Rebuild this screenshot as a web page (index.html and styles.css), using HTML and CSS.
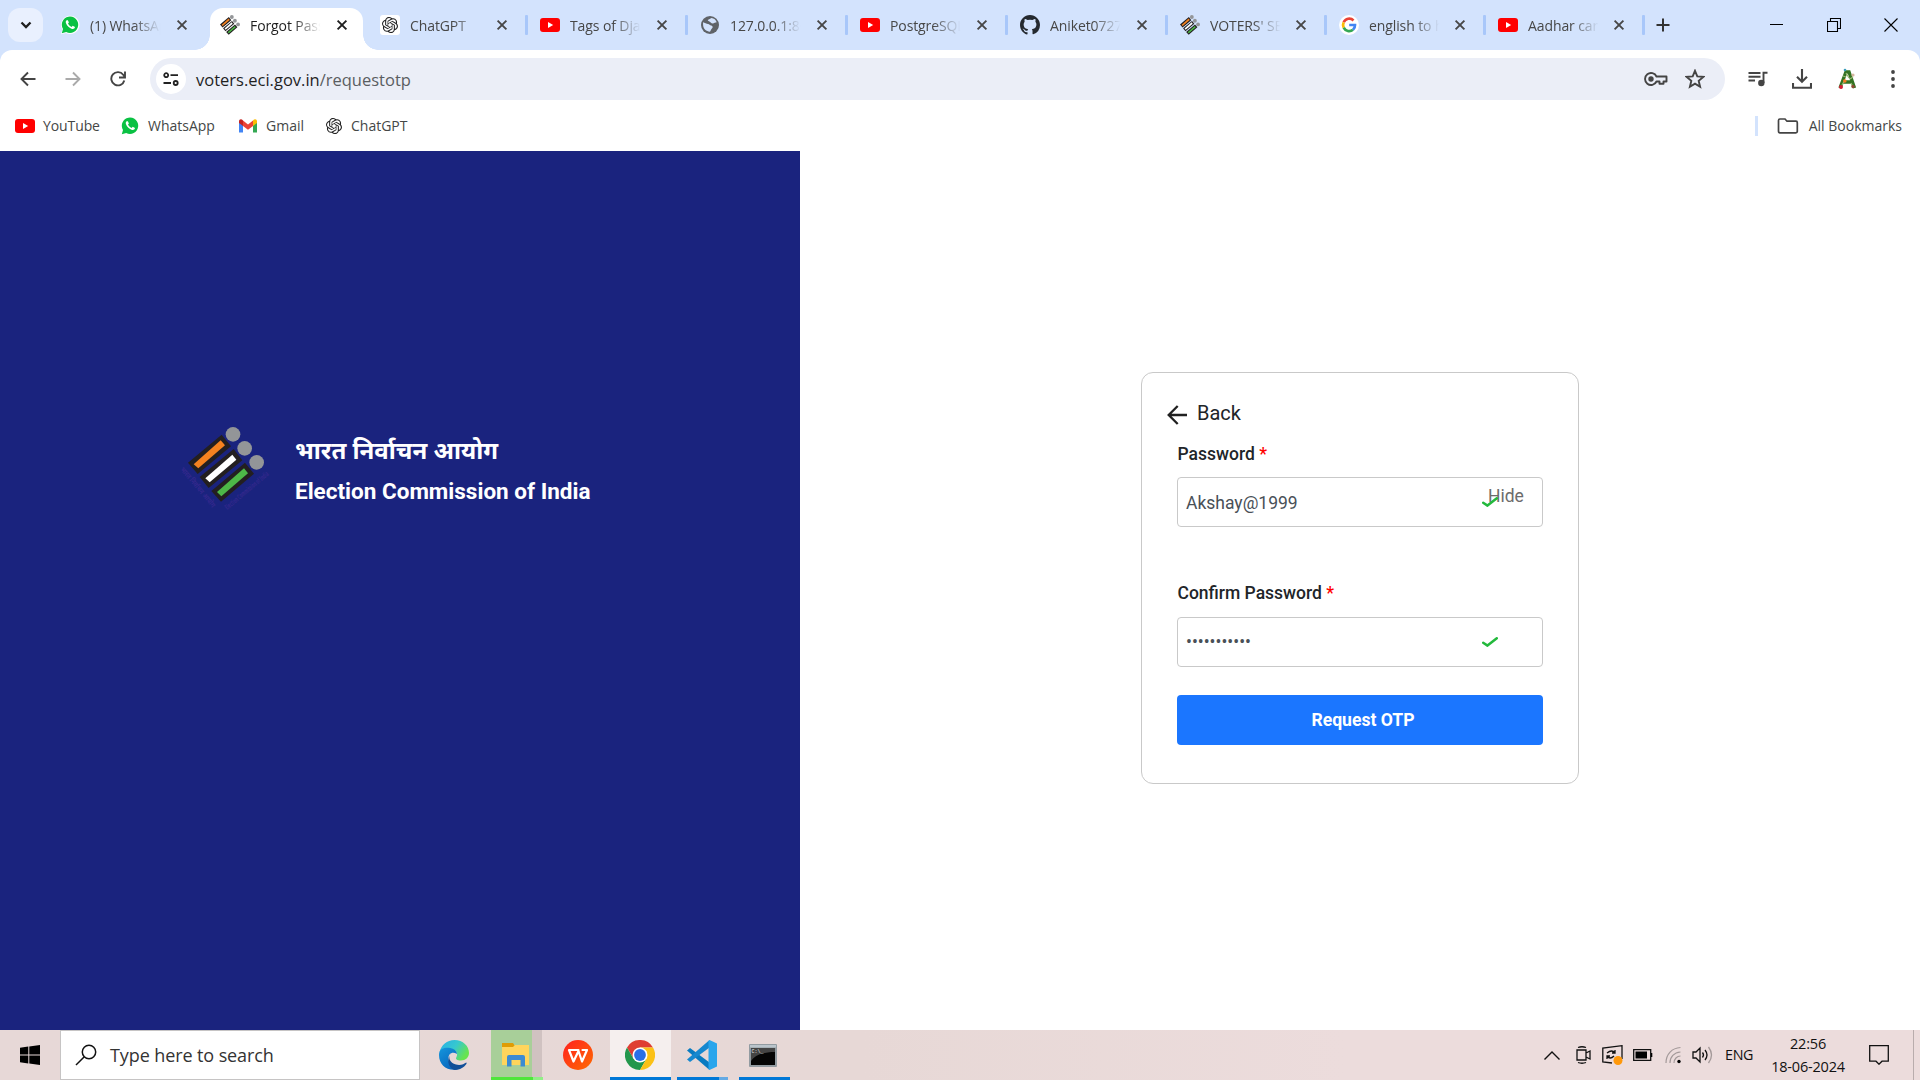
FILE: index.html
```html
<!DOCTYPE html>
<html lang="en">
<head>
<meta charset="utf-8">
<title>Forgot Password</title>
<link rel="stylesheet" href="styles.css">
</head>
<body>
<svg class="defs" aria-hidden="true">
  <symbol id="close" viewBox="0 0 12 12"><path d="M1.6 1.6l8.8 8.8M10.4 1.6l-8.8 8.8" stroke="currentColor" stroke-width="1.9" fill="none"/></symbol>
  <symbol id="youtube" viewBox="0 0 20 20"><rect y="3" width="20" height="14" rx="3" fill="#f00"/><path d="M8 7l5.2 3L8 13z" fill="#fff"/></symbol>
  <symbol id="whatsapp" viewBox="0 0 20 20"><path d="M1 19.3l1.3-4.9A9.2 9.2 0 1 1 6 18z" fill="#fff"/><path d="M1.8 18.3l1.2-4.3A8.2 8.2 0 1 1 6.2 17z" fill="#0ac143"/><path d="M6.7 5.2c-.9.7-1.2 1.8-.7 3 1.1 2.8 3.3 4.9 6 5.7 1.6.4 2.8-.4 3-1.8l-2.3-1.3-1.1 1.2c-1.8-.7-2.9-1.8-3.6-3.4l.9-1-1-2.4z" fill="#fff"/></symbol>
  <symbol id="gpt" viewBox="0 0 24 24"><path fill="#222" d="M22.282 9.821a5.985 5.985 0 0 0-.516-4.910 6.046 6.046 0 0 0-6.510-2.900A6.065 6.065 0 0 0 4.981 4.182a5.985 5.985 0 0 0-3.998 2.900 6.046 6.046 0 0 0 .743 7.097 5.980 5.980 0 0 0 .511 4.911 6.051 6.051 0 0 0 6.515 2.900A5.985 5.985 0 0 0 13.260 24a6.056 6.056 0 0 0 5.772-4.206 5.990 5.990 0 0 0 3.998-2.900 6.056 6.056 0 0 0-.748-7.073zM13.260 22.430a4.476 4.476 0 0 1-2.876-1.041l.142-.080 4.778-2.758a.795.795 0 0 0 .393-.681v-6.737l2.020 1.169a.071.071 0 0 1 .038.052v5.583a4.504 4.504 0 0 1-4.495 4.493zM3.600 18.304a4.471 4.471 0 0 1-.535-3.014l.142.085 4.783 2.759a.771.771 0 0 0 .781 0l5.843-3.369v2.332a.080.080 0 0 1-.033.062L9.740 19.950a4.500 4.500 0 0 1-6.140-1.646zM2.341 7.896a4.485 4.485 0 0 1 2.366-1.973V11.600a.766.766 0 0 0 .388.677l5.814 3.354-2.020 1.169a.076.076 0 0 1-.071 0l-4.830-2.787A4.504 4.504 0 0 1 2.341 7.872zm16.597 3.855l-5.833-3.387L15.119 7.200a.076.076 0 0 1 .071 0l4.830 2.791a4.494 4.494 0 0 1-.676 8.105v-5.678a.790.790 0 0 0-.407-.667zm2.010-3.023l-.142-.085-4.774-2.782a.776.776 0 0 0-.785 0L9.409 9.230V6.897a.066.066 0 0 1 .028-.061l4.830-2.787a4.500 4.500 0 0 1 6.680 4.660zM8.307 12.863l-2.020-1.164a.080.080 0 0 1-.038-.057V6.075a4.500 4.500 0 0 1 7.376-3.454l-.142.081L8.704 5.460a.795.795 0 0 0-.393.681zm1.098-2.365l2.602-1.500 2.607 1.500v2.999l-2.598 1.500-2.607-1.500z"/></symbol>
  <symbol id="emblem" viewBox="0 0 228 228"><g fill="#231f20"><path d="M0 108L101 24l28 35L29 142z"/><path d="M35 151l102-84 26 34L62 184z"/><path d="M70 193l101-85 27 33L99 225z"/></g>
    <path d="M17 113l81-72 13 15-80 69z" fill="#f58220"/><path d="M52 155l81-71 12 15-80 68z" fill="#fff"/><path d="M87 196l81-71 12 15-80 69z" fill="#4db848"/>
    <g fill="#939598"><circle cx="135" cy="23" r="22"/><circle cx="170" cy="65" r="22"/><circle cx="206" cy="107" r="22"/></g></symbol>
  <symbol id="globe" viewBox="0 0 20 20"><circle cx="10" cy="10" r="9" fill="#5f6368"/><path d="M3 7.2c1.800.3 3.500 1.800 5 1.800 1.600 0 1.600 1.500 3.200 1.500 1.600.2 2 2 .7 3-1 .7-1 2.300-2 3.200-3.500 0-6.800-3-6.800-6.600zM11.500 3c-1.400.5-2.300 1.500-3.800 2 .2 1.500 2 1.300 3 2.500 1 1.500 3 1.200 4 .3l2-.5C16 5 14 3.200 11.500 3z" fill="#d3e3fd"/></symbol>
  <symbol id="github" viewBox="0 0 16 16"><path fill="#24292f" d="M8 0C3.580 0 0 3.580 0 8c0 3.540 2.290 6.530 5.470 7.590.4.070.55-.17.55-.38v-1.500c-2.230.48-2.700-1.070-2.700-1.070-.36-.92-.89-1.170-.89-1.170-.73-.5.060-.49.060-.49.800.060 1.230.83 1.230.83.710 1.220 1.870.87 2.330.66.070-.52.280-.87.510-1.070-1.780-.2-3.640-.89-3.640-3.950 0-.87.310-1.590.82-2.150-.08-.2-.36-1.020.08-2.120 0 0 .67-.21 2.200.82a7.600 7.600 0 0 1 4 0c1.530-1.040 2.200-.82 2.200-.82.440 1.100.16 1.920.08 2.120.51.560.82 1.270.82 2.150 0 3.070-1.870 3.750-3.650 3.950.29.250.54.730.54 1.480v2.200c0 .21.150.46.550.38A8 8 0 0 0 16 8c0-4.420-3.580-8-8-8z"/></symbol>
  <symbol id="google" viewBox="0 0 20 20"><circle cx="10" cy="10" r="10" fill="#fff"/><g fill="none" stroke-width="2.700"><path d="M14.500 5.500A6 6 0 0 0 4.700 7.300" stroke="#ea4335"/><path d="M4.700 7.300a6 6 0 0 0 0 5.400" stroke="#fbbc05"/><path d="M4.700 12.700a6 6 0 0 0 9.300 2" stroke="#34a853"/><path d="M14 14.700A6 6 0 0 0 16 10h-5.800" stroke="#4285f4"/></g></symbol>
  <symbol id="tick" viewBox="0 0 16 10"><path d="M1.200 5.800L5.500 8.600 14.800 1.300" fill="none" stroke="#23b93c" stroke-width="2.500" stroke-linecap="round" stroke-linejoin="round"/></symbol>
</svg>

<header class="tabs">
  <button class="tab-search"><svg width="12" height="8" viewBox="0 0 12 8"><path d="M1.500 1.500L6 6l4.500-4.500" fill="none" stroke="#1f1f1f" stroke-width="2.300"/></svg></button>
  <div class="tab"><svg class="fav"><use href="#whatsapp"/></svg><span class="title">(1) WhatsApp</span><svg class="x"><use href="#close"/></svg></div>
  <div class="tab active"><svg class="fav"><use href="#emblem"/></svg><span class="title">Forgot Password</span><svg class="x"><use href="#close"/></svg></div>
  <div class="tab sep"><svg class="fav tile" viewBox="-3 -3 30 30"><use href="#gpt" width="24" height="24"/></svg><span class="title">ChatGPT</span><svg class="x"><use href="#close"/></svg></div>
  <div class="tab sep"><svg class="fav"><use href="#youtube"/></svg><span class="title">Tags of Django</span><svg class="x"><use href="#close"/></svg></div>
  <div class="tab sep"><svg class="fav"><use href="#globe"/></svg><span class="title">127.0.0.1:8000</span><svg class="x"><use href="#close"/></svg></div>
  <div class="tab sep"><svg class="fav"><use href="#youtube"/></svg><span class="title">PostgreSQL</span><svg class="x"><use href="#close"/></svg></div>
  <div class="tab sep"><svg class="fav"><use href="#github"/></svg><span class="title">Aniket0727</span><svg class="x"><use href="#close"/></svg></div>
  <div class="tab sep short"><svg class="fav"><use href="#emblem"/></svg><span class="title">VOTERS' SERVICE</span><svg class="x"><use href="#close"/></svg></div>
  <div class="tab sep short"><svg class="fav"><use href="#google"/></svg><span class="title">english to hindi</span><svg class="x"><use href="#close"/></svg></div>
  <div class="tab sep short"><svg class="fav"><use href="#youtube"/></svg><span class="title">Aadhar card</span><svg class="x"><use href="#close"/></svg></div>
  <svg class="plus" width="14" height="14" viewBox="0 0 14 14"><path d="M7 .5v13M.5 7h13" stroke="#333" stroke-width="2"/></svg>
  <div class="window-controls">
    <svg width="14" height="14" viewBox="0 0 14 14"><path d="M0 6.500h13" stroke="#000"/></svg>
    <svg width="14" height="14" viewBox="0 0 14 14"><path d="M.5 3.500h10v10H.5zM3.500 3.500v-3h10v10h-3" fill="none" stroke="#000" stroke-width="1.100"/></svg>
    <svg width="14" height="14" viewBox="0 0 14 14"><path d="M.5.5l13 13M13.500.5l-13 13" stroke="#000" stroke-width="1.100"/></svg>
  </div>
</header>

<div class="chrome">
  <nav class="toolbar">
    <svg class="nav-icon" width="16" height="16" viewBox="0 0 16 16"><path d="M15.500 8H2M8 1.500L1.500 8 8 14.500" fill="none" stroke="#444" stroke-width="1.900"/></svg>
    <svg class="nav-icon" width="16" height="16" viewBox="0 0 16 16"><path d="M.5 8H14M8 1.500L14.500 8 8 14.500" fill="none" stroke="#aaa" stroke-width="1.900"/></svg>
    <svg class="nav-icon" width="16" height="16" viewBox="0 0 16 16"><path d="M14.300 9.400A6.600 6.600 0 1 1 13.200 3.800L14.500 5.500M15 .5v6H9" fill="none" stroke="#444" stroke-width="1.900"/></svg>
    <div class="omnibox">
      <span class="site"><svg width="16" height="14" viewBox="0 0 16 14"><g fill="none" stroke="#222" stroke-width="1.800"><circle cx="3.200" cy="3.200" r="2"/><path d="M7.500 3.200H15M.5 11H8"/><circle cx="12.700" cy="11" r="2"/></g></svg></span>
      <span class="url">voters.eci.gov.in<span class="path">/requestotp</span></span>
      <svg class="key" width="24" height="14" viewBox="0 0 24 14"><path d="M12.500 4.500a6 6 0 1 0 0 5H15.500v2.300h4V9.500H22.500v-5z" fill="none" stroke="#444" stroke-width="1.900" stroke-linejoin="round"/><circle cx="7" cy="7" r="2.700" fill="#444"/></svg>
      <svg class="star" width="20" height="20" viewBox="0 0 20 20"><path d="M10 1.800l2.300 5.600 6 .5-4.600 4 1.400 5.900L10 14.600l-5.100 3.200 1.400-5.900-4.600-4 6-.5z" fill="none" stroke="#444" stroke-width="1.900"/></svg>
    </div>
    <svg class="media" width="20" height="16" viewBox="0 0 20 16"><path d="M.5 2h12M.5 5.700h12M.5 9.500h6.500M15.500 12V1.700h4" fill="none" stroke="#444" stroke-width="1.900"/><circle cx="13.300" cy="12" r="3.200" fill="#444"/></svg>
    <svg class="download" width="20" height="20" viewBox="0 0 20 20"><path d="M10 0v12.500M5 7.700l5 5 5-5M1 14v4.800h18V14" fill="none" stroke="#444" stroke-width="2.100"/></svg>
    <svg class="avatar" width="20" height="22" viewBox="0 0 20 22"><path d="M3 20L9 4h3l5.500 16M6 14h8.500" fill="none" stroke="#347323" stroke-width="3.400"/><path d="M9 5L12 10M5 17l3-5M14 15l2 4M6 8l3 1M13 11l3-2" stroke="#9ab872" stroke-width="1.300"/><circle cx="4" cy="19" r="2" fill="#d51e34"/><circle cx="7.800" cy="13" r="1.800" fill="#f27b21"/><circle cx="16" cy="18.500" r="1.700" fill="#8d4a33"/><circle cx="8" cy="2" r="1.300" fill="#399dbb"/><circle cx="16" cy="7" r="1.600" fill="#d6b6a0"/></svg>
    <svg class="dots" width="4" height="18" viewBox="0 0 4 18"><g fill="#444"><circle cx="2" cy="2" r="1.900"/><circle cx="2" cy="9" r="1.900"/><circle cx="2" cy="16" r="1.900"/></g></svg>
  </nav>
  <nav class="bookmarks">
    <svg width="20" height="20"><use href="#youtube"/></svg><span class="b-youtube">YouTube</span>
    <svg width="20" height="20"><use href="#whatsapp"/></svg><span class="b-whatsapp">WhatsApp</span>
    <svg width="20" height="20" viewBox="0 0 20 20"><path d="M1 5v11.500h4V9z" fill="#4285f4"/><path d="M15 9v7.500h4V5z" fill="#34a853"/><path d="M5 4.500L10 8.500l5-4V10l-5 3.800L5 10z" fill="#ea4335"/><path d="M1 5.500C1 3 3.500 2.500 5 4.500V10L1 7z" fill="#c5221f"/><path d="M15 4.500c1.500-2 4-1.500 4 1V7l-4 3z" fill="#fbbc04"/></svg><span class="b-gmail">Gmail</span>
    <svg width="16" height="16"><use href="#gpt"/></svg><span class="b-gpt">ChatGPT</span>
    <i class="divider"></i>
    <svg width="22" height="16" viewBox="0 0 22 16"><path d="M1.500 13V2.500Q1.500 1 3 1H8l2 2.200h9Q20.300 3.200 20.300 4.700v8.800q0 1.300-1.500 1.300H3q-1.500 0-1.500-1.800z" fill="none" stroke="#444" stroke-width="1.700"/></svg>
    <span class="all">All Bookmarks</span>
  </nav>
</div>

<main class="page">
  <section class="brand">
    <svg class="logo" width="96" height="90" viewBox="48 72 288 270"><g class="motto"><text transform="translate(60 209) rotate(50)" textLength="150" lengthAdjust="spacingAndGlyphs">भारत निर्वाचन आयोग</text><text transform="translate(202 330) rotate(-40)" textLength="164" lengthAdjust="spacingAndGlyphs">Election Commission of India</text></g><use href="#emblem" x="84" y="80" width="228" height="228"/></svg>
    <div class="names"><p class="hindi">भारत निर्वाचन आयोग</p><p class="english">Election Commission of India</p></div>
  </section>
  <section class="content">
    <form class="card">
      <a class="back"><svg width="21" height="20" viewBox="0 0 21 20"><path d="M20 10H2M10.700 1L1.700 10l9 9" fill="none" stroke="#212121" stroke-width="2.300"/></svg><span>Back</span></a>
      <label class="label">Password <b>*</b></label>
      <div class="field"><span class="value">Akshay@1999</span><span class="hide">Hide</span><svg class="tick" width="16" height="10"><use href="#tick"/></svg></div>
      <label class="label confirm">Confirm Password <b>*</b></label>
      <div class="field"><span class="value secret">•••••••••••</span><svg class="tick" width="16" height="10"><use href="#tick"/></svg></div>
      <button type="button" class="submit">Request OTP</button>
    </form>
  </section>
</main>

<footer class="taskbar">
  <div class="start"><svg width="20" height="20" viewBox="0 0 20 20"><path d="M0 2.800L8.300 1.600v8H0zM9.300 1.400L20 0v9.600H9.300zM0 10.500h8.300v7.900L0 17.200zM9.300 10.500H20V20L9.300 18.500z"/></svg></div>
  <div class="search"><svg width="22" height="22" viewBox="0 0 22 22"><g fill="none" stroke="#111" stroke-width="1.500"><circle cx="14" cy="8" r="6.700"/><path d="M9.300 12.700L1 21"/></g></svg><span>Type here to search</span></div>
  <div class="apps">
    <div class="app edge"><svg width="30" height="30" viewBox="0 0 30 30"><defs><linearGradient id="eg" x1="0" x2="1" y1="0" y2=".5"><stop stop-color="#28aee7"/><stop offset=".55" stop-color="#36c8cf"/><stop offset="1" stop-color="#67e44f"/></linearGradient><linearGradient id="eb" x1="0" x2=".6" y1="0" y2="1"><stop stop-color="#1596dc"/><stop offset="1" stop-color="#0866bd"/></linearGradient></defs><path d="M.5 12.500C2 5 8 0 15.500 0 24 0 30 6 30 13c0 4.500-3.500 7.500-8 7.500-4 0-6-1.300-4.500-3.500C20 12 15 8.500 10 9c-4 0-7 1.500-9.500 3.500z" fill="url(#eg)"/><path d="M0 15C0 8 6 7.500 9.500 7.700c5 .3 8.500 3 8.500 6.300-5-3-9 0-8.500 5 .4 5 4 9 9 10.500C8 31.500 0 25 0 15z" fill="url(#eb)"/><path d="M12.500 12.500C8 17 11 23 17 24.500c4.500 1.200 8-.5 10.300-2C29 23 24 30 15.500 30 9 28 7 19 12.500 12.500z" fill="#114f98"/></svg></div>
    <div class="app files"><svg width="28" height="24" viewBox="0 0 28 24"><path d="M0 0h11l2 3v4H0z" fill="#df9c05"/><path d="M0 4h11l2-2h14v20H0z" fill="#ffd55c"/><path d="M5 23.500V14q0-2 2-2h14q2 0 2 2v9.500h-4.500V17h-9v6.500z" fill="#3c8bd2"/></svg></div>
    <div class="app wps"><svg width="30" height="30" viewBox="0 0 30 30"><defs><linearGradient id="wg" x2="1" y2="1"><stop stop-color="#ff2020"/><stop offset="1" stop-color="#ff6b00"/></linearGradient></defs><circle cx="15" cy="15" r="15" fill="url(#wg)"/><path d="M15.500 10H6l4.500 11.500L15.500 11l3.500 10.500L24 10h-4.500" fill="none" stroke="#fff" stroke-width="2.200" stroke-linejoin="round" stroke-linecap="round"/></svg></div>
    <div class="app chrome-app"><svg width="30" height="30" viewBox="0 0 30 30"><path d="M2 7.500A15 15 0 0 1 28 7.500H15L8.500 18.700z" fill="#df3e32"/><path d="M2 7.500A15 15 0 0 0 15 30l6.500-11.300h-13z" fill="#23974c"/><path d="M28 7.500A15 15 0 0 1 15 30l6.500-11.300V11L15 7.500z" fill="#fbc116"/><circle cx="15" cy="15" r="7.500" fill="#fff"/><circle cx="15" cy="15" r="5.900" fill="#296fe8"/></svg></div>
    <div class="app code"><svg width="30" height="30" viewBox="0 0 30 30"><path d="M0 10.500L3 8l19.500 14.500V30z" fill="#087bc1"/><path d="M0 19.500L3 22 22.500 7.500V0z" fill="#1688cf"/><path d="M22.500 0L30 3.500v23L22.500 30l-1-1V1z" fill="#29a5ec"/></svg></div>
    <div class="app term"><svg width="28" height="23" viewBox="0 0 28 23"><rect width="28" height="23" rx="1" fill="#929ba1"/><path d="M1 1h26v2.500H1z" fill="#bac4cb"/><path d="M2 4h24v17H2z" fill="#050505"/><path d="M2 4h24v4C14 8 6 11 2 17z" fill="#444"/><text x="2.500" y="8.500" fill="#eee" font-family="Liberation Mono,monospace" font-size="5">C:\_</text></svg></div>
  </div>
  <div class="tray">
    <svg class="up" width="16" height="9" viewBox="0 0 16 9"><path d="M.5 8.500L8 1l7.500 7.500" fill="none" stroke="#111" stroke-width="1.400"/></svg>
    <svg class="cam" width="16" height="18" viewBox="0 0 16 18"><path d="M1 4h9v10H1zM10 7l4-2v8l-4-2M2 1.500Q6 0 10 1.500M2 16.500q4 1.500 8 0" fill="none" stroke="#111" stroke-width="1.300"/></svg>
    <svg class="sync" width="21" height="20" viewBox="0 0 21 20"><path d="M10 18L.8 17V3L20 .7V14M5 8q5-4 8 0M13 5v3h-3M12 11q-4 4-7 0M5 14v-3h3" fill="none" stroke="#111" stroke-width="1.300"/><circle cx="16" cy="15.500" r="4.500" fill="#ff980a"/></svg>
    <svg class="battery" width="20" height="12" viewBox="0 0 20 12"><path d="M.7.7h17v10.600H.7z" fill="none" stroke="#111" stroke-width="1.300"/><path d="M2.500 2.500H14v7H2.500zM18 4h1.300v4H18z"/></svg>
    <svg class="wifi" width="17" height="18" viewBox="0 0 17 18"><g fill="none" stroke="#a39999" stroke-width="1.200"><path d="M1 17C1 8 7 2 15.500 1.500M5 17C5 11 9 6.500 15.500 6M9 17c0-4 3-7 6.500-7"/></g><circle cx="14" cy="15.500" r="1.700"/></svg>
    <svg class="sound" width="21" height="18" viewBox="0 0 21 18"><g fill="none" stroke="#111" stroke-width="1.300"><path d="M1 6h3l4-4v14l-4-4H1zM10.500 6.500q2 2.500 0 5M13 4q4 5 0 10"/><path d="M16.500 1q6 8 0 16" stroke="#a39999"/></g></svg>
    <span class="lang">ENG</span>
    <div class="clock"><span class="time">22:56</span><span class="date">18-06-2024</span></div>
    <svg class="notice" width="20" height="20" viewBox="0 0 20 20"><path d="M.7.7h18.600v15.500H13l-3 3-3-3H.7z" fill="none" stroke="#111" stroke-width="1.300"/></svg>
  </div>
</footer>
</body>
</html>
```
FILE: styles.css
```css
* { box-sizing: border-box; }
body { margin: 0; width: 1920px; height: 1080px; overflow: hidden; display: flex; flex-direction: column; background: #d3e3fd; color: #444746; font: 14px/20px "Open Sans", "Noto Sans", sans-serif; }
svg { display: block; flex: none; }
p { margin: 0; }
.defs { position: absolute; width: 0; height: 0; }

.tabs { display: flex; height: 50px; align-items: center; background: #d3e3fd; }
.tab-search { width: 35px; height: 34px; margin: 0 3px 0 8px; padding: 0; border: 0; border-radius: 12px; background: #e9f0fe; display: flex; align-items: center; justify-content: center; }
.tab { position: relative; width: 160px; height: 50px; padding-left: 14px; display: flex; align-items: center; flex: none; color: #474747; }
.tab.short { width: 159px; }
.fav { width: 20px; height: 20px; }
.tile { background: #fff; border-radius: 3px; }
.title { flex: none; width: 72px; margin-left: 10px; padding-top: 1px; overflow: hidden; white-space: nowrap; letter-spacing: -.1px; -webkit-mask-image: linear-gradient(90deg, #000 60%, transparent 98%); mask-image: linear-gradient(90deg, #000 60%, transparent 98%); }
.x { width: 12px; height: 12px; margin-left: 14px; }
.sep::after { content: ""; flex: none; width: 3px; height: 20px; border-radius: 1px; background: #a8c7fa; margin-left: 17px; }
.short .x { margin-left: 13px; }
.active { color: #1f1f1f; z-index: 0; }
.active::before { content: ""; position: absolute; z-index: -1; left: 4px; right: 3px; top: 8px; bottom: 0; border-radius: 13px 13px 0 0; background: #fff; }
.active::after { content: ""; position: absolute; z-index: -1; left: -11px; right: -12px; bottom: 0; height: 15px; background: radial-gradient(circle at 0 0, transparent 14.5px, #fff 15px) 0 0 / 15px 15px no-repeat, radial-gradient(circle at 100% 0, transparent 14.5px, #fff 15px) 100% 0 / 15px 15px no-repeat; }
.plus { margin-left: 13px; }
.window-controls { display: flex; gap: 43px; margin: 0 22px 0 auto; }

.chrome { height: 101px; background: #fff; border-radius: 12px 12px 0 0; }
.toolbar { display: flex; align-items: center; height: 58px; padding-left: 20px; }
.nav-icon { margin-right: 29px; }
.omnibox { display: flex; align-items: center; width: 1575px; height: 42px; margin-left: -5px; padding-left: 6px; border-radius: 21px; background: #ebeef7; }
.site { display: flex; align-items: center; justify-content: center; width: 30px; height: 30px; border-radius: 50%; background: #fff; }
.url { margin-left: 10px; padding-top: 2px; color: #1f1f1f; font-size: 16.5px; }
.path { color: #5a5d61; }
.key { margin-left: auto; }
.star { margin: 0 20px 0 17px; }
.media { margin-left: 23px; }
.download { margin-left: 24px; }
.avatar { margin-left: 25px; }
.dots { margin-left: 34px; }
.bookmarks { display: flex; align-items: center; height: 36px; padding-left: 15px; }
.bookmarks span { margin-left: 8px; white-space: nowrap; }
.b-youtube { width: 77px; letter-spacing: -.1px; }
.b-whatsapp { width: 90px; }
.b-gmail { width: 60px; }
.bookmarks .b-gpt { margin-left: 9px; }
.bookmarks .all { margin-right: 18px; margin-left: 10px; }
.divider { width: 3px; height: 20px; margin: 0 19px 0 auto; background: #d3e3fd; }

.page { display: flex; height: 879px; background: #fff; font-family: Roboto, sans-serif; }
.brand { width: 800px; display: flex; padding: 273px 0 0 176px; background: #1a237e; color: #fff; }
.logo { overflow: visible; }
.motto { fill: #33288c; font: 700 22px "Noto Sans", sans-serif; }
.names { margin-left: 23px; padding-top: 11px; font-weight: 700; white-space: nowrap; }
.hindi { font: 700 24px/36px "Noto Sans Devanagari", "Noto Sans", sans-serif; }
.english { font-size: 22.5px; line-height: 36px; margin-top: 2px; }
.content { flex: 1; padding: 221px 0 0 341px; }
.card { width: 438px; height: 412px; padding: 22px 35px 0; border: 1px solid #c9c9c9; border-radius: 12px; color: #212529; }
.back { display: flex; align-items: center; gap: 9px; height: 35px; margin-left: -10px; font-size: 20px; }
.back svg { margin-top: 4px; }
.back span { line-height: 32px; }
.label { display: block; height: 26px; margin-top: 11px; padding-left: .5px; font-size: 17.5px; line-height: 26px; font-weight: 500; color: #212529; }
.label b { color: #f00; font-weight: 500; }
.field { position: relative; display: flex; align-items: center; width: 366px; height: 50px; margin-top: 10px; padding: 1px 0 0 8px; border: 1px solid #c9c9c9; border-radius: 4px; font-size: 17.5px; color: #495057; }
.confirm { margin-top: 53px; }
.confirm + .field { margin-top: 11px; padding-top: 0; }
.hide { position: absolute; left: 310px; top: 8px; color: #6c6c6c; }
.tick { position: absolute; left: 304px; top: 19px; }
.submit { display: block; width: 366px; height: 50px; margin-top: 28px; padding: 0 0 0 6px; border: 0; border-radius: 4px; background: #1b76ff; color: #fff; font: 700 17.6px Roboto, sans-serif; }

.taskbar { display: flex; align-items: stretch; height: 50px; background: linear-gradient(90deg, #e7d8d7, #e7d8d6 45%, #ecdcdc 70%); color: #111; }
.start { display: flex; align-items: center; width: 60px; padding-left: 20px; }
.search { display: flex; align-items: center; width: 360px; border: 1px solid #c6c4c4; padding-left: 14px; gap: 13px; background: #fff; color: #333; font-size: 18px; letter-spacing: -.1px; }
.apps { display: flex; }
.app { display: flex; align-items: center; justify-content: center; border-bottom: 3px solid transparent; padding-top: 3px; }
.edge { width: 67px; }
.edge svg { margin-left: 1px; }
.files { width: 55px; margin-left: 4px; justify-content: flex-start; padding-left: 11px; background: linear-gradient(90deg, #a8cf99 41px, #d0c2c1 41px 51px, transparent 51px); border-image: linear-gradient(90deg, #4ee63b 0 41px, #90ef86 41px 51px, transparent 51px) 1; border-width: 0 0 3px; border-style: solid; }
.wps { width: 62px; padding-left: 2px; }
.chrome-app { width: 61px; margin-left: 2px; padding-right: 1px; background: #f5efee; border-color: #0078d7; }
.code { width: 51px; margin-left: 6px; padding-right: 1px; border-image: linear-gradient(90deg, #0078d7 41px, #65aae4 41px) 1; border-width: 0 0 3px; border-style: solid; }
.term { width: 51px; margin-left: 11px; padding-right: 3px; border-color: #0078d7; }
.tray { display: flex; align-items: center; margin-left: auto; width: 376px; }
.cam { margin-left: 16px; }
.sync { margin-left: 10px; }
.battery { margin-left: 10px; }
.wifi { margin-left: 12px; }
.sound { margin-left: 10px; }
.lang { margin-left: 12px; width: 30px; font-size: 14.3px; letter-spacing: -.3px; }
.clock { display: flex; flex-direction: column; align-items: center; width: 78px; margin-left: 14px; line-height: 23px; font-size: 14.5px; letter-spacing: -.2px; }
.notice { margin-left: 22px; }
.tray::after { content: ""; align-self: stretch; border-left: 1px solid #b9adad; margin-left: auto; width: 6px; flex: none; }
```
